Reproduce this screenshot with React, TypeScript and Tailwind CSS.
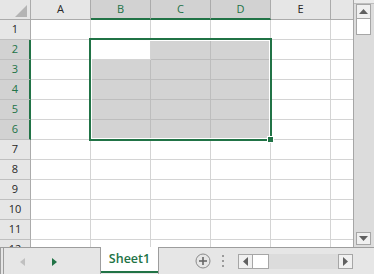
import React from "react";

const GREEN = "#217346";

const colLetters = ["A", "B", "C", "D", "E"];

function isSelected(row: number, col: number) {
  // col index 0..4 => A..E ; selection B2:D6
  return row >= 2 && row <= 6 && col >= 1 && col <= 3;
}

function Cell({ row, col }: { row: number; col: number }) {
  const sel = isSelected(row, col);
  const active = row === 2 && col === 1;
  if (sel && !active) {
    return <div className="w-[60px] h-full border-r border-b border-[#bdbdbd] bg-[#d3d3d3]" />;
  }
  return <div className="w-[60px] h-full border-r border-b border-[#d4d4d4] bg-white" />;
}

function RowHeader({ n }: { n: number }) {
  const sel = n >= 2 && n <= 6;
  if (sel) {
    return (
      <div className="w-[31px] h-full flex items-center justify-center bg-[#d2d2d2] border-b border-[#bfbfbf] border-r-2 border-r-[#217346] text-[#217346] pl-[1px]">
        {n}
      </div>
    );
  }
  return (
    <div className="w-[31px] h-full flex items-center justify-center bg-[#e6e6e6] border-b border-[#bfbfbf] border-r border-r-[#ababab] text-[#262626]">
      {n}
    </div>
  );
}

function Row({ n }: { n: number }) {
  return (
    <div className="flex h-[20px] shrink-0">
      <RowHeader n={n} />
      {colLetters.map((_, i) => (
        <Cell key={i} row={n} col={i} />
      ))}
      <div className="w-[22px] h-full border-b border-[#d4d4d4] bg-white" />
    </div>
  );
}

function HeaderRow() {
  return (
    <div className="flex h-[20px] shrink-0">
      <div className="w-[31px] h-full bg-[#e6e6e6] border-r border-b border-[#ababab] relative">
        <svg width="31" height="20" className="block">
          <polygon points="15,17 27,5 27,17" fill="#b4b4b4" />
        </svg>
      </div>
      {colLetters.map((c, i) => {
        const sel = i >= 1 && i <= 3;
        return sel ? (
          <div
            key={c}
            className="w-[60px] h-full flex items-center justify-center bg-[#d2d2d2] border-r border-r-[#ababab] border-b-2 border-b-[#217346] text-[#217346]"
          >
            {c}
          </div>
        ) : (
          <div
            key={c}
            className="w-[60px] h-full flex items-center justify-center bg-[#e6e6e6] border-r border-b border-[#ababab] text-[#262626]"
          >
            {c}
          </div>
        );
      })}
      <div className="w-[22px] h-full bg-[#e6e6e6] border-b border-[#ababab]" />
    </div>
  );
}

function VScrollbar() {
  return (
    <div className="w-[21px] h-[247px] border-l border-[#a6a6a6] bg-[#dcdcdc] flex flex-col">
      <div className="h-[4px] w-full bg-[#ececec] border-b border-[#bdbdbd] shrink-0" />
      <div className="pl-[2px] flex flex-col">
        <div className="w-[15px] h-[15px] bg-[#f0f0f0] border border-[#a6a6a6] flex items-center justify-center">
          <svg width="9" height="5">
            <polygon points="0,5 4.5,0 9,5" fill="#606060" />
          </svg>
        </div>
        <div className="w-[15px] h-[16px] bg-white border border-t-0 border-[#a6a6a6]" />
      </div>
      <div className="flex-1" />
      <div className="pl-[2px] pb-[2px]">
        <div className="w-[15px] h-[13px] bg-[#f0f0f0] border border-[#a6a6a6] flex items-center justify-center">
          <svg width="9" height="5">
            <polygon points="0,0 9,0 4.5,5" fill="#606060" />
          </svg>
        </div>
      </div>
    </div>
  );
}

function TabBar() {
  return (
    <div className="flex h-[27px] bg-[#e6e6e6] shrink-0">
      <div className="w-[101px] h-full border-t border-r border-l border-[#9d9d9d] flex">
        <div className="w-[3px] h-full border-r border-[#9d9d9d]" />
        <div className="flex items-center pl-[16px] pt-[1px]">
          <svg width="5" height="8">
            <polygon points="5,0 0,4 5,8" fill="#c0c0c0" />
          </svg>
          <svg width="5" height="8" className="ml-[27px]">
            <polygon points="0,0 5,4 0,8" fill={GREEN} />
          </svg>
        </div>
      </div>
      <div className="w-[57px] h-[26px] bg-white border-b-2 border-[#217346] flex items-center justify-center font-semibold text-[12.5px] text-[#217346] pt-[1px]">
        Sheet1
      </div>
      <div className="flex-1 h-full border-t border-l border-[#9d9d9d] flex items-center">
        <svg width="16" height="16" className="ml-[36px]">
          <circle cx="8" cy="8" r="7" fill="none" stroke="#8a8a8a" strokeWidth="1" />
          <line x1="4" y1="8" x2="12" y2="8" stroke="#666" strokeWidth="1.6" />
          <line x1="8" y1="4" x2="8" y2="12" stroke="#666" strokeWidth="1.6" />
        </svg>
        <div className="ml-[11px] flex flex-col gap-[3px]">
          <div className="w-[2px] h-[2px] bg-[#9a9a9a]" />
          <div className="w-[2px] h-[2px] bg-[#9a9a9a]" />
          <div className="w-[2px] h-[2px] bg-[#9a9a9a]" />
        </div>
        <div className="ml-[14px] flex h-[15px]">
          <div className="w-[15px] h-[15px] bg-[#f0f0f0] border border-[#a6a6a6] flex items-center justify-center">
            <svg width="5" height="9">
              <polygon points="5,0 0,4.5 5,9" fill="#606060" />
            </svg>
          </div>
          <div className="w-[16px] h-[15px] bg-white border border-l-0 border-[#a6a6a6]" />
          <div className="w-[69px] h-[15px] bg-[#dcdcdc]" />
          <div className="w-[15px] h-[15px] bg-[#f0f0f0] border border-[#a6a6a6] flex items-center justify-center">
            <svg width="5" height="9">
              <polygon points="0,0 5,4.5 0,9" fill="#606060" />
            </svg>
          </div>
        </div>
      </div>
    </div>
  );
}

export default function App() {
  const rows = Array.from({ length: 12 }, (_, i) => i + 1);
  return (
    <div
      className="w-[374px] h-[274px] overflow-hidden bg-white flex flex-col text-[11px]"
      style={{ fontFamily: '"Open Sans", "Noto Sans", sans-serif' }}
    >
      <div className="flex h-[247px] shrink-0">
        <div className="relative w-[353px] h-[247px] overflow-hidden flex flex-col">
          <HeaderRow />
          {rows.map((n) => (
            <Row key={n} n={n} />
          ))}
          {/* selection border */}
          <div className="absolute left-[89px] top-[38px] w-[183px] h-[103px] border-2 border-[#217346] shadow-[inset_0_0_0_1px_#ffffff]" />
          {/* fill handle */}
          <div className="absolute left-[267px] top-[136px] w-[7px] h-[7px] bg-[#217346] border border-white" />
        </div>
        <VScrollbar />
      </div>
      <TabBar />
    </div>
  );
}
